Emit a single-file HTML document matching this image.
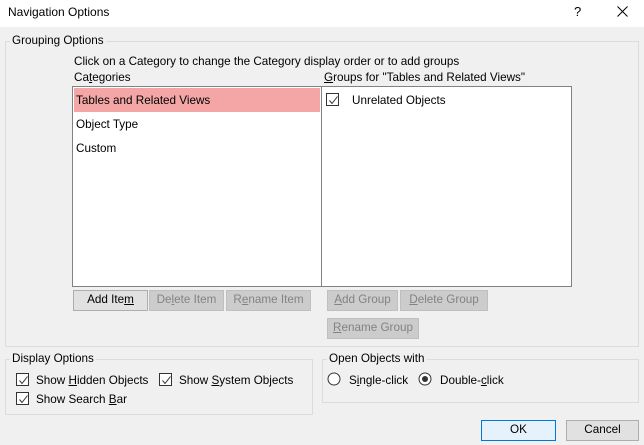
<!DOCTYPE html>
<html><head><style>
*{box-sizing:border-box;margin:0;padding:0}
body{width:644px;height:445px;background:#f0f0f0;font-family:"Liberation Sans",sans-serif;font-size:11.7px;color:#000;position:relative;overflow:hidden}
.a{position:absolute;white-space:nowrap}
.title{left:0;top:0;width:644px;height:27px;background:#fff}
.grp{border:1px solid #dcdcdc}
.lbl{background:#f0f0f0;padding:0 2px}
.box{background:#fff;border:1px solid #828282}
.btn{background:#e1e1e1;border:1px solid #adadad;text-align:center;line-height:18px}
.dis{background:#cccccc;border:1px solid #bfbfbf;color:#838383}
.cb{width:13px;height:13px;border:1px solid #333;background:#fff}
.cb svg{position:absolute;left:1px;top:1px}
u{text-decoration:underline}
</style></head><body>
<div class="a title"></div>
<div class="a" style="left:8px;top:5px;font-size:12px">Navigation Options</div>
<div class="a" style="left:574px;top:4px;font-size:13px">?</div>
<svg class="a" style="left:617px;top:6px" width="11" height="11"><path d="M0.5 0.5L10.5 10.5M10.5 0.5L0.5 10.5" stroke="#000" stroke-width="1"/></svg>

<div class="a grp" style="left:5px;top:41px;width:634px;height:306px"></div>
<div class="a lbl" style="left:10px;top:34px">Grouping Options</div>
<div class="a" style="left:74px;top:55px">Click on a Category to change the Category display order or to add groups</div>
<div class="a" style="left:74px;top:71px">Ca<u>t</u>egories</div>
<div class="a" style="left:324px;top:71px"><u>G</u>roups for "Tables and Related Views"</div>
<div class="a box" style="left:72px;top:86px;width:250px;height:201px"></div>
<div class="a box" style="left:321px;top:86px;width:251px;height:201px"></div>
<div class="a" style="left:74px;top:88px;width:246px;height:24px;background:#f4a6a6"></div>
<div class="a" style="left:76px;top:94px">Tables and Related Views</div>
<div class="a" style="left:76px;top:118px">Object Type</div>
<div class="a" style="left:76px;top:142px">Custom</div>
<div class="a cb" style="left:326px;top:93px"><svg width="11" height="11"><path d="M1.5 5.5L4 8.5L9.5 1.5" stroke="#333" fill="none"/></svg></div>
<div class="a" style="left:352px;top:94px">Unrelated Objects</div>

<div class="a btn" style="left:73px;top:290px;width:75px;height:21px">Add Ite<u>m</u></div>
<div class="a btn dis" style="left:149px;top:290px;width:75px;height:21px">De<u>l</u>ete Item</div>
<div class="a btn dis" style="left:226px;top:290px;width:85px;height:21px">R<u>e</u>name Item</div>
<div class="a btn dis" style="left:327px;top:290px;width:71px;height:21px"><u>A</u>dd Group</div>
<div class="a btn dis" style="left:400px;top:290px;width:88px;height:21px"><u>D</u>elete Group</div>
<div class="a btn dis" style="left:327px;top:318px;width:92px;height:21px"><u>R</u>ename Group</div>

<div class="a grp" style="left:5px;top:359px;width:308px;height:56px"></div>
<div class="a lbl" style="left:10px;top:352px">Display Options</div>
<div class="a cb" style="left:16px;top:373px"><svg width="11" height="11"><path d="M1.5 5.5L4 8.5L9.5 1.5" stroke="#333" fill="none"/></svg></div>
<div class="a" style="left:36px;top:374px">Show <u>H</u>idden Objects</div>
<div class="a cb" style="left:159px;top:373px"><svg width="11" height="11"><path d="M1.5 5.5L4 8.5L9.5 1.5" stroke="#333" fill="none"/></svg></div>
<div class="a" style="left:179px;top:374px">Show <u>S</u>ystem Objects</div>
<div class="a cb" style="left:16px;top:392px"><svg width="11" height="11"><path d="M1.5 5.5L4 8.5L9.5 1.5" stroke="#333" fill="none"/></svg></div>
<div class="a" style="left:36px;top:393px">Show Search <u>B</u>ar</div>

<div class="a grp" style="left:322px;top:359px;width:317px;height:44px"></div>
<div class="a lbl" style="left:327px;top:352px">Open Objects with</div>
<svg class="a" style="left:327px;top:372px" width="14" height="14"><circle cx="7" cy="7" r="6" fill="#fff" stroke="#333"/></svg>
<div class="a" style="left:349px;top:374px">S<u>i</u>ngle-click</div>
<svg class="a" style="left:418px;top:372px" width="14" height="14"><circle cx="7" cy="7" r="6" fill="#fff" stroke="#333"/><circle cx="7" cy="7" r="3" fill="#333"/></svg>
<div class="a" style="left:440px;top:374px">Double-<u>c</u>lick</div>

<div class="a btn" style="left:481px;top:420px;width:75px;height:21px;background:#e5f1fb;border-color:#0078d7">OK</div>
<div class="a btn" style="left:566px;top:420px;width:73px;height:21px">Cancel</div>
</body></html>
